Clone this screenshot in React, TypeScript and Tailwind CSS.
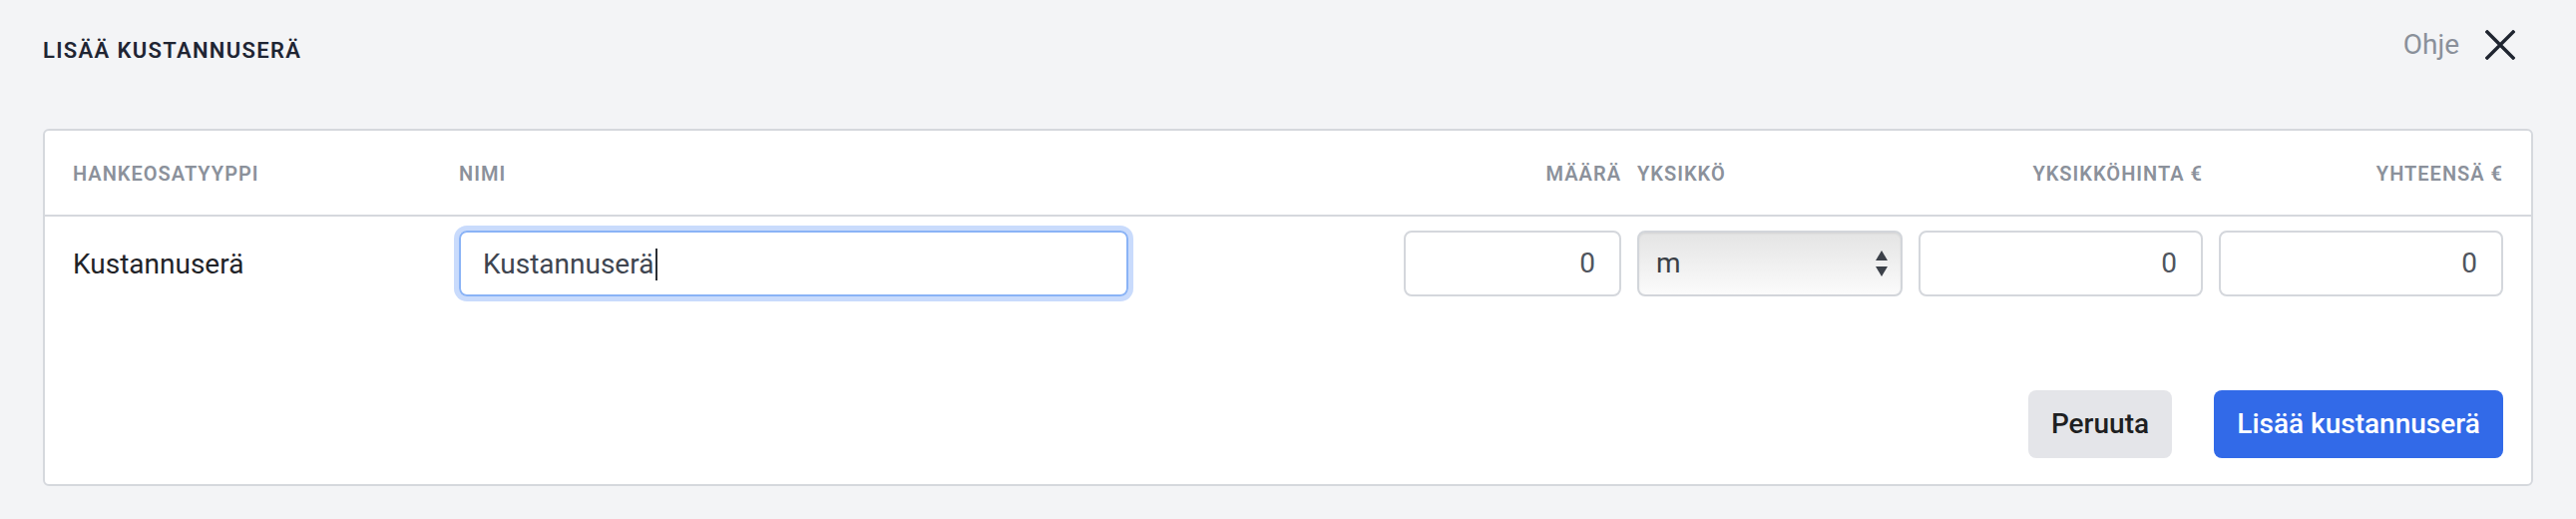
import React from "react"

const font = { fontFamily: "Roboto, 'Liberation Sans', sans-serif" }

function CloseIcon() {
  return (
    <svg width="30" height="30" viewBox="0 0 30 30" fill="none">
      <path d="M2 2 28 28M28 2 2 28" stroke="#1f2530" strokeWidth="3.4" strokeLinecap="square" />
    </svg>
  )
}

function SelectArrows() {
  return (
    <svg width="14" height="26" viewBox="0 0 14 26" fill="#3c4149">
      <path d="M7 0 13 10H1Z" />
      <path d="M7 26 13 16H1Z" />
    </svg>
  )
}

function NumberBox({ value, width }: { value: string; width?: string }) {
  return (
    <div
      className={`h-[66px] ${width ?? "w-full"} rounded-[8px] border-2 border-[#d4d7dc] bg-white flex items-center justify-end pr-[24px] text-[28px] text-[#4f555e]`}
    >
      {value}
    </div>
  )
}

export default function App() {
  return (
    <div style={font} className="w-full h-[520px] bg-[#f3f4f6] px-[43px]">
      {/* Header */}
      <div className="flex h-[100px] items-center justify-between">
        <h1 className="text-[22px] font-semibold tracking-[0.06em] text-[#1f2533]">LISÄÄ KUSTANNUSERÄ</h1>
        <div className="flex items-center gap-[26px] mb-[10px] mr-[18px]">
          <span className="text-[28px] text-[#8a909a]">Ohje</span>
          <CloseIcon />
        </div>
      </div>

      {/* Card */}
      <div className="mt-[29px] rounded-[6px] border-2 border-[#d5d8dd] bg-white">
        <div className="grid h-[86px] grid-cols-[371px_671px_1fr_266px_285px_285px] items-center gap-x-[16px] border-b-2 border-[#d5d8dd] px-[28px] pt-[2px] text-[20px] font-semibold tracking-[0.05em] text-[#8b919b]">
          <div>HANKEOSATYYPPI</div>
          <div>NIMI</div>
          <div className="text-right">MÄÄRÄ</div>
          <div>YKSIKKÖ</div>
          <div className="text-right">YKSIKKÖHINTA €</div>
          <div className="text-right">YHTEENSÄ €</div>
        </div>

        <div className="px-[28px] pt-[14px] pb-[26px]">
          <div className="grid grid-cols-[371px_671px_1fr_266px_285px_285px] items-center gap-x-[16px]">
            <div className="pt-[2px] text-[28px] text-[#1f2328]">Kustannuserä</div>
            <div className="flex h-[66px] items-center rounded-[8px] border-2 border-[#8ab3f6] pl-[22px] pt-[2px] text-[28px] text-[#3e4550] ring-[5px] ring-[#c9dbfc]">
              Kustannuserä
              <span className="ml-[2px] inline-block h-[32px] w-[2px] bg-[#2b2f35]" />
            </div>
            <div className="flex justify-end">
              <NumberBox value="0" width="w-[218px]" />
            </div>
            <div className="flex h-[66px] items-center justify-between rounded-[8px] border-2 border-[#d2d5da] bg-gradient-to-b from-[#e4e4e4] to-[#fbfbfb] pl-[17px] pr-[12px] text-[28px] text-[#3a3f46] shadow-[inset_0_1px_2px_rgba(0,0,0,0.08)]">
              <span>m</span>
              <SelectArrows />
            </div>
            <NumberBox value="0" />
            <NumberBox value="0" />
          </div>

          <div className="mt-[94px] flex justify-end gap-[42px]">
            <button className="h-[68px] w-[144px] rounded-[8px] bg-[#e4e5e9] text-[28px] font-medium text-[#1e1f22]">
              Peruuta
            </button>
            <button className="h-[68px] w-[290px] rounded-[8px] bg-[#326ae8] text-[28px] font-medium text-white">
              Lisää kustannuserä
            </button>
          </div>
        </div>
      </div>
    </div>
  )
}
